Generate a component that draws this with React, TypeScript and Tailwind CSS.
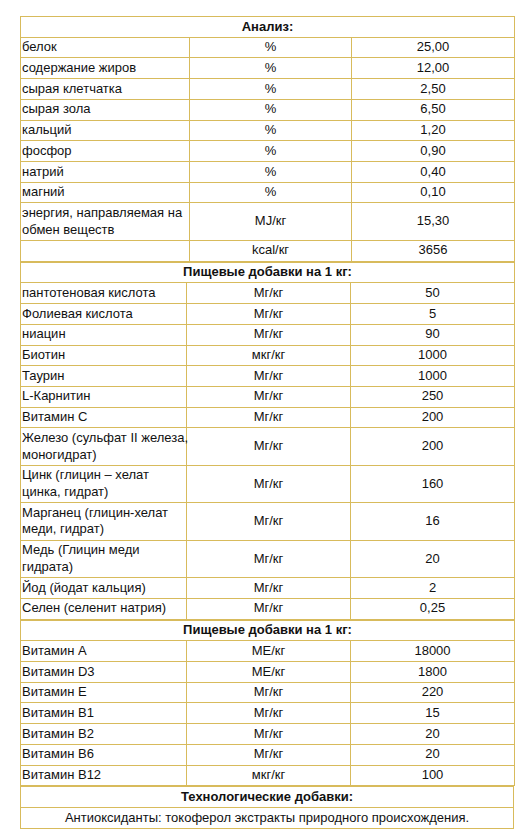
import React from "react";

type Row = [string, string, string];

const analysis: Row[] = [
  ["белок", "%", "25,00"],
  ["содержание жиров", "%", "12,00"],
  ["сырая клетчатка", "%", "2,50"],
  ["сырая зола", "%", "6,50"],
  ["кальций", "%", "1,20"],
  ["фосфор", "%", "0,90"],
  ["натрий", "%", "0,40"],
  ["магний", "%", "0,10"],
  ["энергия, направляемая на\nобмен веществ", "MJ/кг", "15,30"],
  ["", "kcal/кг", "3656"],
];

const additives: Row[] = [
  ["пантотеновая кислота", "Мг/кг", "50"],
  ["Фолиевая кислота", "Мг/кг", "5"],
  ["ниацин", "Мг/кг", "90"],
  ["Биотин", "мкг/кг", "1000"],
  ["Таурин", "Мг/кг", "1000"],
  ["L-Карнитин", "Мг/кг", "250"],
  ["Витамин C", "Мг/кг", "200"],
  ["Железо (сульфат II железа,\nмоногидрат)", "Мг/кг", "200"],
  ["Цинк (глицин – хелат\nцинка, гидрат)", "Мг/кг", "160"],
  ["Марганец (глицин-хелат\nмеди, гидрат)", "Мг/кг", "16"],
  ["Медь (Глицин меди\nгидрата)", "Мг/кг", "20"],
  ["Йод (йодат кальция)", "Мг/кг", "2"],
  ["Селен (селенит натрия)", "Мг/кг", "0,25"],
];

const vitamins: Row[] = [
  ["Витамин A", "МЕ/кг", "18000"],
  ["Витамин D3", "МЕ/кг", "1800"],
  ["Витамин E", "Мг/кг", "220"],
  ["Витамин B1", "Мг/кг", "15"],
  ["Витамин B2", "Мг/кг", "20"],
  ["Витамин B6", "Мг/кг", "20"],
  ["Витамин B12", "мкг/кг", "100"],
];

const cell = "border border-[#d8bb5c] px-[1px] py-[1.5px] align-middle";

const Section = ({
  title,
  rows,
  cols,
}: {
  title: string;
  rows: Row[];
  cols: [string, string, string];
}) => (
  <table className="w-full table-fixed border-collapse border border-[#d8bb5c]">
    <colgroup>
      <col className={cols[0]} />
      <col className={cols[1]} />
      <col className={cols[2]} />
    </colgroup>
    <tbody>
      <tr>
        <td colSpan={3} className={`${cell} text-center font-bold`}>
          {title}
        </td>
      </tr>
      {rows.map((r, i) => (
        <tr key={i}>
          <td className={`${cell} whitespace-pre text-left`}>{r[0]}</td>
          <td className={`${cell} text-center`}>{r[1]}</td>
          <td className={`${cell} text-center`}>{r[2]}</td>
        </tr>
      ))}
    </tbody>
  </table>
);

export default function App() {
  return (
    <div className="min-h-screen bg-white pt-4 pl-5 font-['Liberation_Sans',Arial,sans-serif] text-[13px] leading-[16.72px] text-[#111]">
      <div className="w-[494px]">
        <Section title="Анализ:" rows={analysis} cols={["w-[169px]", "w-[162px]", "w-[163px]"]} />
        <Section
          title="Пищевые добавки на 1 кг:"
          rows={additives}
          cols={["w-[166px]", "w-[164px]", "w-[164px]"]}
        />
        <Section
          title="Пищевые добавки на 1 кг:"
          rows={vitamins}
          cols={["w-[166px]", "w-[164px]", "w-[164px]"]}
        />
        <table className="w-full border-collapse border border-[#d8bb5c]">
          <tbody>
            <tr>
              <td className={`${cell} text-center font-bold`}>Технологические добавки:</td>
            </tr>
            <tr>
              <td className={`${cell} text-center`}>
                Антиоксиданты: токоферол экстракты природного происхождения.
              </td>
            </tr>
          </tbody>
        </table>
      </div>
    </div>
  );
}
